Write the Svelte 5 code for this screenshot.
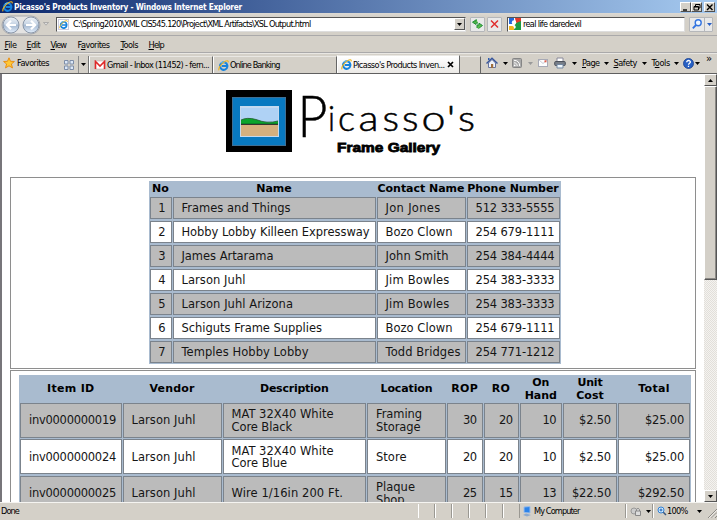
<script>
  // Spreads the letters so that a label takes exactly the given width.
  function fit(node, width) {
    const natural = node.getBoundingClientRect().width;
    const count = node.textContent.length;
    if (width && count > 1) {
      node.style.letterSpacing = `${(width - natural) / count}px`;
    }
  }

  const menus = [
    ['F', 'ile', 12, 22], ['E', 'dit', 13.5, 24], ['V', 'iew', 15.5, 27],
    ['Fa', 'vorites', 32, 43], ['T', 'ools', 17.5, 28], ['H', 'elp', 15.5, 20]
  ];

  const letters = [
    ['i', 103, 7, 47], ['c', 113, 17, 47], ['a', 133.5, 20, 47], ['s', 157.5, 16.5, 47],
    ['s', 177, 16.5, 47], ['o', 196.5, 24, 47], ["'", 221.5, 9, 47], ['s', 233, 17, 47]
  ];

  const vendors = [
    ['Frames and Things', 109, 'Jon Jones', 55, '512 333-5555'],
    ['Hobby Lobby Killeen Expressway', 188, 'Bozo Clown', 67, '254 679-1111'],
    ['James Artarama', 92, 'John Smith', 63, '254 384-4444'],
    ['Larson Juhl', 64, 'Jim Bowles', 64, '254 383-3333'],
    ['Larson Juhl Arizona', 111.5, 'Jim Bowles', 64, '254 383-3333'],
    ['Schiguts Frame Supplies', 140.5, 'Bozo Clown', 67, '254 679-1111'],
    ['Temples Hobby Lobby', 127, 'Todd Bridges', 75, '254 771-1212']
  ];

  const heads = [
    [['Item ID', 47.5]], [['Vendor', 45]], [['Description', 68.5]], [['Location', 52]],
    [['ROP', 27]], [['RO', 18.5]], [['On', 17], ['Hand', 32]], [['Unit', 25], ['Cost', 27.5]], [['Total', 31.5]]
  ];

  const items = [
    { id: 'inv0000000019', desc: [['MAT 32X40 White', 102], ['Core Black', 60.5]], loc: [['Framing', 46], ['Storage', 44.5]], nums: ['30', '20', '10', '$2.50', '$25.00'] },
    { id: 'inv0000000024', desc: [['MAT 32X40 White', 102], ['Core Blue', 55.5]], loc: [['Store', 30.5]], nums: ['20', '20', '10', '$2.50', '$25.00'] },
    { id: 'inv0000000025', desc: [['Wire 1/16in 200 Ft.', 111.5]], loc: [['Plaque', 39], ['Shop', 28.5]], nums: ['25', '15', '13', '$22.50', '$292.50'] }
  ];
  const numWidth = { 2: 13.5, 5: 32, 6: 39, 7: 46 };
</script>

{#snippet ie(size)}
  <svg width={size} height={size} viewBox="0 0 12 12">
    <path d="M10.2 7.7A4.1 4.1 0 1 1 10.2 5.6V6.6H4" fill="none" stroke="#1683dd" stroke-width="2.2" />
    <path d="M3 3.5Q5 1.5 8 2.3" fill="none" stroke="#70c8ff" stroke-width="1" />
    <path d="M1.3 11.2C-.3 9.8 3 4.5 7.2 1.8C9.5.4 11.7.2 11 2.6" fill="none" stroke="#efb51d" stroke-width="1.2" />
  </svg>
{/snippet}
{#snippet caret(c)}
  <svg class="caret" width="5" height="3" viewBox="0 0 5 3"><path d="M0 0H5L2.5 3Z" fill={c} /></svg>
{/snippet}
{#snippet lines(list)}
  <div class="lines">
    {#each list as [t, w]}<div><span class="t" use:fit={w}>{t}</span></div>{/each}
  </div>
{/snippet}

<div class="window">
  <header class="title">
    {@render ie(11)}
    <span class="t" use:fit={228}>Picasso's Products Inventory - Windows Internet Explorer</span>
    <div class="winbtns">
      <i><svg width="10" height="9" viewBox="0 0 10 9"><path d="M2 7H6" stroke="#000" stroke-width="1.4" /></svg></i>
      <i><svg width="10" height="9" viewBox="0 0 10 9"><path d="M3.5 3V1.5H8V5H6.5M2 3.5H6.5V7H2ZM2 4H6.5" fill="none" stroke="#000" /></svg></i>
      <i class="gap"><svg width="10" height="9" viewBox="0 0 10 9"><path d="M2 1.5L7.5 7M7.5 1.5L2 7" stroke="#000" stroke-width="1.4" /></svg></i>
    </div>
  </header>

  <div class="nav">
    <svg class="backfwd" width="40" height="20" viewBox="0 0 40 20">
      <defs>
        <linearGradient id="orb" x1="0" y1="0" x2="0" y2="1">
          <stop offset="0" stop-color="#eef2f7" /><stop offset=".45" stop-color="#c6d4e4" />
          <stop offset=".5" stop-color="#a3b7cf" /><stop offset="1" stop-color="#e3eefb" />
        </linearGradient>
      </defs>
      <rect x="1" y="1" width="38" height="18" rx="9" fill="#e4e3e2" stroke="#a7a9ad" />
      <circle cx="10" cy="10" r="8" fill="url(#orb)" stroke="#8b98a9" />
      <circle cx="30" cy="10" r="8" fill="url(#orb)" stroke="#8b98a9" />
      <path d="M15 10H6M10 5.8L5.8 10L10 14.2M25 10H34M30 5.8L34.2 10L30 14.2" fill="none" stroke="#fff" stroke-width="2.2" />
    </svg>
    <svg class="hist" width="6" height="4" viewBox="0 0 6 4"><path d="M.5.5H5.5L3 3.2Z" fill="#ddd" stroke="#999" stroke-width=".7" /></svg>
    <div class="address">
      <span class="fav">{@render ie(9)}</span>
      <span class="t" use:fit={237.5}>C:\Spring2010\XML CIS545.120\Project\XML Artifacts\XSL Output.html</span>
      <i class="drop">{@render caret('#000')}</i>
    </div>
    <i class="nbtn refresh"><svg width="13" height="12" viewBox="0 0 13 12"><path d="M5.5 1.5L1.5 4.2L5 6.5V5H7M3.5 4.2L5.5 2M7.5 10.5L11.5 7.5L8 5.2V7H6V10" fill="#5abb4a" stroke="#23913a" stroke-width="1" /></svg></i>
    <i class="nbtn stop"><svg width="13" height="12" viewBox="0 0 13 12"><path d="M3 2.5L10 9.5M10 2.5L3 9.5" stroke="#e03030" stroke-width="1.5" /></svg></i>
    <div class="search">
      <svg width="12" height="12" viewBox="0 0 12 12">
        <rect width="12" height="12" fill="#fff" /><path d="M0 0H5V6H0Z" fill="#2468d8" /><path d="M6 0H12V6L7 5Z" fill="#e33a2a" />
        <path d="M6 5.5L12 3V12H5Z" fill="#1c9b43" /><path d="M0 8H5V12H0Z" fill="#f3b51e" /><circle cx="5" cy="4.5" r="2.2" fill="#fff" /><circle cx="5" cy="9" r="1.8" fill="#fff" /><circle cx="3" cy="10" r="2" fill="#f3b51e" />
      </svg>
      <span class="t" use:fit={58}>real life daredevil</span>
    </div>
    <i class="nbtn go">
      <svg width="14" height="12" viewBox="0 0 14 12"><circle cx="8.2" cy="4.8" r="3" fill="#eff7ff" stroke="#3474e0" stroke-width="1.4" /><path d="M6 7L2.8 10.3" stroke="#3474e0" stroke-width="1.8" /></svg>
      <b></b>{@render caret('#275fc5')}
    </i>
  </div>

  <nav class="menu">
    {#each menus as [a, b, w, step]}
      <span class="mi" style:width="{step}px"><span class="t" use:fit={w}>{#if a === 'Fa'}F<u>a</u>{:else}<u>{a}</u>{/if}{b}</span></span>
    {/each}
  </nav>

  <div class="tabs">
    <div class="favs">
      <svg width="12" height="12" viewBox="0 0 12 12"><path d="M6 .8L7.5 4.3L11.4 4.5L8.4 7L9.5 10.9L6 8.8L2.5 10.9L3.6 7L.6 4.5L4.5 4.3Z" fill="#ffc835" stroke="#e98f13" /></svg>
      <span class="t" use:fit={32}>Favorites</span>
    </div>
    <div class="quick">
      <svg width="12" height="12" viewBox="0 0 12 12"><path d="M1.5 1.5H5V5H1.5ZM7 1.5H10.5V5H7ZM1.5 7H5V10.5H1.5ZM7 7H10.5V10.5H7Z" fill="#dce8f8" stroke="#7d8da8" /></svg>
    </div>
    <div class="quickdrop">{@render caret('#000')}</div>
    <div class="tab gm">
      <svg width="12" height="10" viewBox="0 0 12 10"><rect x="1" y="1" width="10" height="8" fill="#fff" stroke="#c9b0b0" stroke-width=".6" /><path d="M1.5 9V1.5L6 6L10.5 1.5V9" fill="none" stroke="#df2929" stroke-width="1.6" /></svg>
      <span class="t" use:fit={102}>Gmail - Inbox (11452) - fern...</span>
    </div>
    <div class="tab ob">{@render ie(11)}<span class="t" use:fit={49.5}>Online Banking</span></div>
    <div class="tab active">
      {@render ie(11)}<span class="t" use:fit={91.5}>Picasso's Products Inven...</span>
      <svg class="x" width="7" height="7" viewBox="0 0 7 7"><path d="M1 1L6 6M6 1L1 6" stroke="#000" stroke-width="1.7" /></svg>
    </div>
    <div class="stub"></div>
    <div class="cmds">
      <svg class="house" width="12" height="12" viewBox="0 0 12 12"><path d="M2.5 6V10.5H9.5V6L6 2.5Z" fill="#eef2fb" stroke="#6674a0" /><path d="M.5 6.5L6 1.2L11.5 6.5" fill="none" stroke="#38569c" stroke-width="1.4" /><path d="M5 7H7.2V11H5Z" fill="#a06f3d" /><path d="M2 1H3.5V3H2Z" fill="#2c5bb0" /></svg>
      <span class="ar" style:width="14px">{@render caret('#000')}</span>
      <svg width="10" height="10" viewBox="0 0 10 10"><rect x=".5" y=".5" width="9" height="9" rx="1" fill="#a9a9a9" stroke="#858585" /><path d="M2 2.3C5.5 2.3 7.7 4.5 7.7 8M2 4.8C4 4.8 5.2 6 5.2 8" fill="none" stroke="#fff" /><circle cx="2.7" cy="7.3" r=".9" fill="#fff" /></svg>
      <span class="ar" style:width="16px">{@render caret('#999')}</span>
      <svg width="10" height="8" viewBox="0 0 10 8"><rect x=".5" y=".5" width="9" height="7" fill="#fdfdfd" stroke="#a7a9b5" /><path d="M1 1L5 4.5L9 1" fill="none" stroke="#c9ccd5" /><rect x="6.5" y="1.3" width="2" height="2" fill="#de5c4a" /></svg>
      <svg class="printer" width="12" height="12" viewBox="0 0 12 12"><path d="M3 1H9V5H3Z" fill="#fff" stroke="#889" /><rect x=".7" y="4.5" width="10.6" height="4" rx="1" fill="#777e88" stroke="#4c515b" /><path d="M3 7.5H9V11H3Z" fill="#eef6fc" stroke="#7489a2" /></svg>
      <span class="ar" style:width="16px">{@render caret('#000')}</span>
      <span class="t" use:fit={17.5}><u>P</u>age</span><span class="ar" style:width="14px">{@render caret('#000')}</span>
      <span class="t" use:fit={23.5}><u>S</u>afety</span><span class="ar" style:width="14.5px">{@render caret('#000')}</span>
      <span class="t" use:fit={18.5}>T<u>o</u>ols</span><span class="ar" style:width="13px">{@render caret('#000')}</span>
      <svg width="11" height="11" viewBox="0 0 11 11"><circle cx="5.5" cy="5.5" r="5" fill="#2760c4" stroke="#173e8e" stroke-width=".8" /><path d="M3.7 4.3C3.7 1.8 7.4 2 7.4 4.1C7.4 5.2 5.5 5.2 5.5 6.8M5.5 7.8V9.1" fill="none" stroke="#fff" stroke-width="1.3" /></svg>
      <span class="ar" style:width="8px">{@render caret('#000')}</span>
      <span class="more">»</span>
    </div>
  </div>

  <div class="body">
    <main>
      <div class="logo">
        <svg width="260" height="74" viewBox="0 0 260 74">
          <rect x="1" y="6" width="66" height="62" fill="#000" />
          <rect x="7.5" y="13.5" width="53" height="48" fill="#0879c0" stroke="#3f6f94" />
          <rect x="15" y="22" width="39" height="31" fill="#c4daf0" />
          <path d="M16 24H53V40H16Z" fill="#afd2f5" />
          <path d="M16 40V36Q22 33 31 35.5Q42 40 53 37V40Z" fill="#0ba42c" />
          <path d="M16 36Q22 33 31 35.5Q42 40 53 37" fill="none" stroke="#245b30" stroke-width=".8" />
          <rect x="16" y="40.5" width="37" height="11.5" fill="#d5b07e" />
          <path d="M16 40.3H53" stroke="#111" />
          <g class="script">
            <text x="72.5" y="53" font-size="58" textLength="30" lengthAdjust="spacingAndGlyphs">P</text>
            {#each letters as [ch, x, w, y]}
              <text {x} {y} font-size="35" textLength={w} lengthAdjust="spacingAndGlyphs">{ch}</text>
            {/each}
          </g>
          <text class="black" x="112" y="67.500" textLength="103" lengthAdjust="spacingAndGlyphs">Frame Gallery</text>
        </svg>
      </div>

      <section class="frame first">
        <div class="grid vend">
          <div class="h"><span class="t" use:fit={17}>No</span></div>
          <div class="h"><span class="t" use:fit={35.5}>Name</span></div>
          <div class="h"><span class="t" use:fit={87}>Contact Name</span></div>
          <div class="h"><span class="t" use:fit={91.5}>Phone Number</span></div>
          {#each vendors as [name, nw, contact, cw, phone], i}
            <div class="c num" class:odd={i % 2 === 0}>{i + 1}</div>
            <div class="c" class:odd={i % 2 === 0}><span class="t" use:fit={nw}>{name}</span></div>
            <div class="c" class:odd={i % 2 === 0}><span class="t" use:fit={cw}>{contact}</span></div>
            <div class="c" class:odd={i % 2 === 0}><span class="t" use:fit={79}>{phone}</span></div>
          {/each}
        </div>
      </section>

      <section class="frame second">
        <div class="grid inv">
          {#each heads as h}<div class="h">{@render lines(h)}</div>{/each}
          {#each items as it, i}
            <div class="c" class:odd={i % 2 === 0}><span class="t" use:fit={87}>{it.id}</span></div>
            <div class="c" class:odd={i % 2 === 0}><span class="t" use:fit={64}>Larson Juhl</span></div>
            <div class="c" class:odd={i % 2 === 0}>{@render lines(it.desc)}</div>
            <div class="c" class:odd={i % 2 === 0}>{@render lines(it.loc)}</div>
            {#each it.nums as n}<div class="c num" class:odd={i % 2 === 0}><span class="t" use:fit={numWidth[n.length]}>{n}</span></div>{/each}
          {/each}
        </div>
      </section>
    </main>
    <div class="scroll">
      <i class="sb"><svg width="5" height="3" viewBox="0 0 5 3"><path d="M0 3H5L2.500 0Z" fill="#000" /></svg></i>
      <div class="thumb"></div>
      <div class="track"></div>
      <i class="sb">{@render caret('#000')}</i>
    </div>
  </div>

  <footer>
    <div class="done"><span class="t" use:fit={18}>Done</span></div>
    <i class="s17"></i><i class="s17"></i><i class="s17"></i><i class="s17"></i><i class="s17"></i><i class="s17"></i>
    <div class="zone">
      <svg width="10" height="11" viewBox="0 0 10 11"><path d="M2 1L8 .5V7L2 6.500Z" fill="#2b83ea" stroke="#9bbce8" /><path d="M1 9L4 7.500L9 9L5 10.500Z" fill="#8ba9cf" /></svg>
      <span class="t" use:fit={45.5}>My Computer</span>
    </div>
    <div class="lock">
      <svg width="12" height="11" viewBox="0 0 12 11"><circle cx="4" cy="5" r="3" fill="#ccc" stroke="#999" /><path d="M5.500 5H10.500V9.500H5.500ZM6.500 5V3.500Q8 1 9.500 3.500V5" fill="#ddd" stroke="#888" /></svg>
      {@render caret('#000')}
    </div>
    <div class="zoom">
      <svg width="10" height="10" viewBox="0 0 10 10"><circle cx="4" cy="4" r="3" fill="#d9efff" stroke="#3181d6" /><path d="M2.500 4H5.500M4 2.500V5.500" stroke="#1b60b5" /><path d="M6.300 6.300L9 9" stroke="#38577f" stroke-width="1.500" /></svg>
      <span class="t" use:fit={20.5}>100%</span>
      {@render caret('#000')}
      <svg class="grip" width="9" height="10" viewBox="0 0 9 10"><path d="M0 10L9 1M3.500 10L9 4.500M7 10L9 8" stroke="#8c8984" /><path d="M1 10L9 2M4.500 10L9 5.500" stroke="#fff" stroke-width=".6" /></svg>
    </div>
  </footer>
</div>

<style>
  :global(body) { margin: 0; }
  .window { width: 717px; height: 520px; overflow: hidden; display: flex; flex-direction: column; background: #d4d0c8; color: #000; font: 8.2px/12px "DejaVu Sans", sans-serif; }
  .window * { box-sizing: border-box; }
  svg { display: block; flex: none; }
  i, b { display: block; flex: none; font-style: normal; }
  .t { display: inline-block; white-space: pre; flex: none; }
  u { text-underline-offset: 1px; text-decoration-thickness: 1px; }

  .title { height: 13px; flex: none; display: flex; align-items: center; padding: 0 2px; gap: 1px; color: #fff; font-weight: bold; font-family: "DejaVu Sans Condensed", "DejaVu Sans", sans-serif; font-stretch: condensed; background: linear-gradient(90deg, #0c286c, #a6caf0); }
  .winbtns { margin-left: auto; display: flex; }
  .winbtns i { width: 11px; height: 10px; background: #d4d0c8; border: 1px solid; border-color: #fff #505050 #505050 #fff; }
  .winbtns .gap { margin-left: 2px; }

  .nav { height: 23px; flex: none; display: flex; align-items: center; border-bottom: 1px solid #aaa9aa; padding: 0 0 0 1px; background: linear-gradient(#dcd9d3, #d4d0c8 4px); }
  .backfwd { margin-top: 1px; }
  .hist { margin: 0 8px 0 2px; }
  .address { width: 410px; height: 15px; margin-left: -1px; flex: none; display: flex; align-items: center; background: #fff; border: 1px solid #555; border-right-color: #ddd; border-bottom-color: #ddd; padding-left: 1px; }
  .fav { width: 11px; height: 11px; border: 1px solid #ccd; margin-right: 4px; }
  .drop { margin-left: auto; width: 11px; height: 12px; background: #d4d0c8; border: 1px solid; border-color: #fff #555 #555 #fff; display: flex; align-items: center; justify-content: center; }
  .nbtn { height: 15px; width: 15px; background: #e9e9e9; border: 1px solid #b5b7ba; border-radius: 1px; display: flex; align-items: center; }
  .refresh { margin-left: 4px; }
  .stop { margin-left: 2px; }
  .search { margin-left: 5px; width: 178px; height: 15px; flex: none; display: flex; align-items: center; gap: 2px; background: #fff; border: 1px solid #555; border-right-color: #ddd; border-bottom-color: #ddd; padding-left: 1px; }
  .go { margin-left: 4px; width: 24px; }
  .go b { width: 1px; height: 13px; background: #b5b7ba; margin-right: 2px; }

  .menu { height: 17px; flex: none; display: flex; align-items: center; padding: 1px 0 0 4.5px; border-bottom: 1px solid #aaa9aa; }
  .mi { flex: none; }

  .tabs { height: 21px; flex: none; display: flex; align-items: stretch; border-bottom: 1px solid #5f5f5f; border-top: 1px solid #e9e7e3; }
  .favs { width: 62px; display: flex; align-items: center; padding-left: 3px; gap: 2px; padding-bottom: 1px; flex: none; }
  .quick { width: 17px; flex: none; display: flex; align-items: center; padding-left: 1px; margin-top: 2px; border-right: 1px solid #8f8f8f; }
  .quickdrop { width: 10px; flex: none; display: flex; align-items: center; justify-content: center; margin-top: 2px; border-right: 1px solid #777; }
  .tab { margin-top: 2px; flex: none; display: flex; align-items: center; gap: 1px; border-left: 1px solid #fff; border-top: 1px solid #e9e7e3; border-right: 1px solid #666; }
  .gm { width: 124px; padding-left: 4px; }
  .ob { width: 124px; padding-left: 4px; }
  .active { width: 123px; padding-left: 3px; margin-top: 1px; background: linear-gradient(#fff, #ebe9e6); }
  .active .x { margin-left: auto; margin-right: 5px; }
  .stub { width: 21px; flex: none; margin-top: 2px; border-right: 1px solid #666; border-top: 1px solid #e9e7e3; }
  .cmds { display: flex; align-items: center; flex: 1; padding-left: 5px; padding-bottom: 1px; }
  .ar { display: flex; justify-content: center; flex: none; }
  .printer { margin-left: 6px; }
  .more { align-self: flex-start; font-size: 10px; line-height: 9px; margin-left: 4px; }

  .body { height: 428px; flex: none; display: flex; overflow: hidden; background: #fff; border-left: 2px solid #77757a; }
  main { width: 702px; flex: none; padding: 10px 0 0 8px; font: 11.5px/12.6px "DejaVu Sans", sans-serif; color: #151515; }
  .logo { padding-left: 215px; height: 93px; }
  .logo svg { overflow: visible; }
  .script text { font-family: Lato, sans-serif; font-weight: 300; fill: #000; stroke: #000; stroke-width: .5; line-height: 1; }
  .black { font: bold 13px "Liberation Sans", sans-serif; fill: #000; stroke: #000; stroke-width: .8; }
  .frame { width: 686px; border: 1px solid #8e8e8e; display: flex; }
  .first { height: 192px; justify-content: center; padding-top: 3px; padding-left: 3px; margin-bottom: 1px; }
  .second { height: 320px; padding: 4px 0 0 8px; }
  .grid { display: grid; background: #a9bbcf; column-gap: 1px; row-gap: 2px; padding: 0 1px 1px; align-self: flex-start; flex: none; }
  .vend { grid-template-columns: 22px 203px 89px 93px; grid-template-rows: 14px repeat(7, 22px); }
  .inv { grid-template-columns: 101.5px 99px 143.5px 79px 35.5px 35px 42.5px 54px 72px; grid-template-rows: 26px repeat(3, 35px); row-gap: 1.5px; }
  .h { display: flex; align-items: center; justify-content: center; text-align: center; font-weight: bold; font-size: 11px; color: #000; padding-top: 3px; }
  .c { background: #fff; border: 1px solid #7b838c; padding: 1.500px 4px 0 8px; display: flex; align-items: center; }
  .odd { background: #bbb; }
  .num { justify-content: flex-end; padding: 1.500px 5px 0 0; }

  .scroll { width: 13px; flex: none; display: flex; flex-direction: column; background: #e9e7e3; }
  .sb { height: 12px; background: #d4d0c8; border: 1px solid; border-color: #fff #555 #555 #fff; display: flex; align-items: center; justify-content: center; }
  .thumb { height: 194px; background: #d4d0c8; border: 1px solid; border-color: #fff #555 #555 #fff; box-shadow: inset -1px -1px #8b8985; }
  .track { flex: 1; background: repeating-conic-gradient(#f4f3f0 0 25%, #e2dfda 0 50%) 0 0 / 2px 2px; }

  footer { height: 18px; flex: none; display: flex; border-top: 1px solid #f5f4f1; padding: 1px 0 2px; }
  .done { width: 418px; padding-left: 1px; flex: none; display: flex; align-items: center; }
  footer i { width: 17px; border-left: 1px solid #fff; border-right: 1px solid #9a9892; }
  .zone { width: 106px; flex: none; display: flex; align-items: center; gap: 2px; padding-left: 2px; border-right: 1px solid #9a9892; }
  .lock { width: 27px; flex: none; display: flex; align-items: center; gap: 4px; padding-left: 3px; border-left: 1px solid #fff; border-right: 1px solid #9a9892; }
  .zoom { flex: 1; display: flex; align-items: center; padding-left: 3px; border-left: 1px solid #fff; }
  .zoom .caret { margin-left: 9px; }
  .grip { margin-left: auto; align-self: flex-end; }
</style>
